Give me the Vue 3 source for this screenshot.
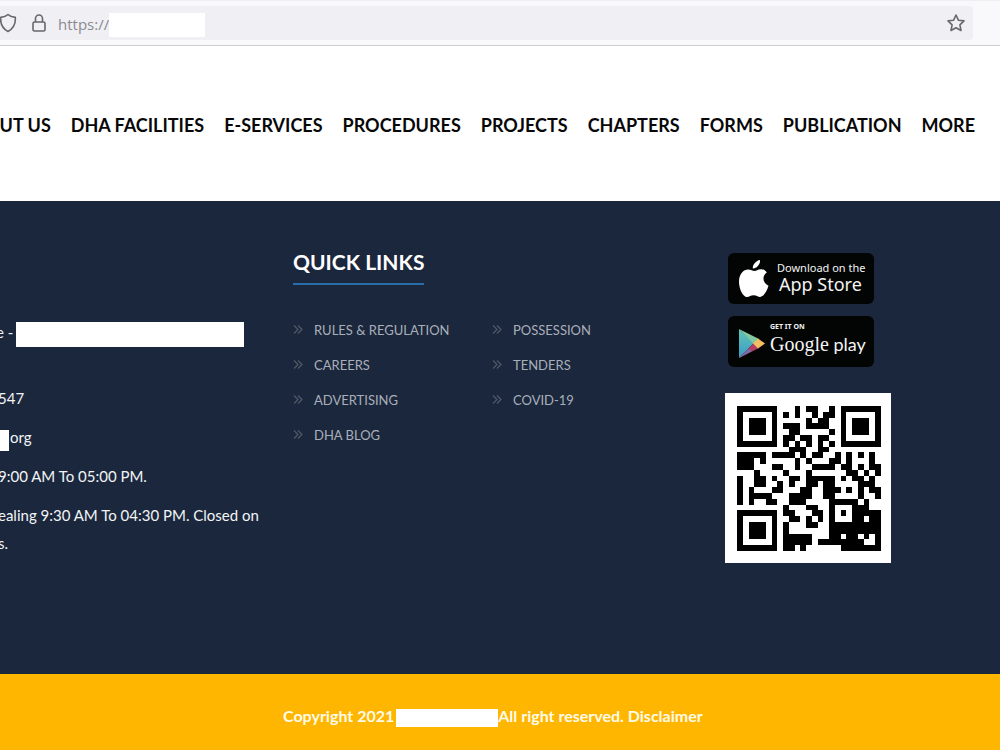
<script setup>
const navItems = ['DHA FACILITIES', 'E-SERVICES', 'PROCEDURES', 'PROJECTS', 'CHAPTERS', 'FORMS', 'PUBLICATION', 'MORE']
const linkColumns = [
  ['RULES & REGULATION', 'CAREERS', 'ADVERTISING', 'DHA BLOG'],
  ['POSSESSION', 'TENDERS', 'COVID-19'],
]

const qrRows = [
  '#######...#.##..#.#######',
  '#.....#.#.#..#.##.#.....#',
  '#.###.#.....#.##..#.###.#',
  '#.###.#.###.####..#.###.#',
  '#.###.#..##.....#.#.###.#',
  '#.....#.##.##.##..#.....#',
  '#######.#.#.#.#.#.#######',
  '.........###..##.........',
  '#####.####.#.##..#.#.#.#.',
  '###.#.....#.#...##.#...#.',
  '###...##..#..####.##.#.##',
  '...#....#...#......##.#.#',
  '#..##.#..##.#####.#.##.#.',
  '#..##..#.#..##.##....###.',
  '#.#...##...##..###.#.#.##',
  '#.####...####..##....#..#',
  '#.#..##..###....#####.#..',
  '........#...##..#...###..',
  '#######.##...##.#.#.#####',
  '#.....#..##.#.#.#...##.##',
  '#.###.#.#...##..#########',
  '#.###.#.#.......#########',
  '#.###.#.#####...##.##.#.#',
  '#.....#.#####.########..#',
  '#######.##.#......#######',
]
const qrPath = qrRows
  .flatMap((row, y) => [...row].map((cell, x) => (cell === '#' ? `M${x} ${y}h1v1h-1z` : '')))
  .join('')
</script>

<template>
  <div class="page">
    <header class="toolbar">
      <div class="address">
        <svg class="shield" viewBox="0 0 20 20" aria-hidden="true">
          <path d="M10 1.500C12 3.500 14.500 4.200 17.300 4.400C17.800 10.500 15.500 15.500 10 18.500C4.500 15.500 2.200 10.500 2.700 4.400C5.500 4.200 8 3.500 10 1.500Z" />
        </svg>
        <svg class="lock" viewBox="0 0 16 20" aria-hidden="true">
          <rect x="2" y="9" width="12" height="9" rx="1.500" />
          <path d="M4.500 9V5.500a3.500 3.500 0 0 1 7 0V9" />
        </svg>
        <input class="url" type="text" value="https://" aria-label="Address" />
        <span class="mask url-mask"></span>
        <button class="bookmark" type="button" aria-label="Bookmark this page">
          <svg viewBox="0 0 20 20" aria-hidden="true">
            <path d="M10 2l2.400 5.200 5.600.700-4.100 3.900 1.100 5.700-5-2.800-5 2.800 1.100-5.700L2 7.900l5.600-.700z" />
          </svg>
        </button>
      </div>
    </header>

    <nav class="nav" aria-label="Main">
      <a href="#">ABOUT US</a>
      <a v-for="item in navItems" :key="item" href="#">{{ item }}</a>
    </nav>

    <main class="footer">
      <section class="contact">
        <p class="address-line">e -<span class="mask name-mask"></span></p>
        <p class="clip">547</p>
        <p><span class="mask mail-mask"></span>org</p>
        <p class="clip"><span>9:00 AM To 05:00 PM.</span></p>
        <p class="clip"><span>ealing 9:30 AM To 04:30 PM. Closed on<br />s.</span></p>
      </section>

      <section class="quick">
        <h2>QUICK LINKS</h2>
        <div class="columns">
          <ul v-for="(column, i) in linkColumns" :key="i">
            <li v-for="link in column" :key="link">
              <svg class="chevrons" viewBox="0 0 10 9" aria-hidden="true">
                <path d="M1 .5l4 4-4 4M5 .5l4 4-4 4" />
              </svg>
              <a href="#">{{ link }}</a>
            </li>
          </ul>
        </div>
      </section>

      <section class="apps">
        <a class="badge" href="#">
          <svg class="apple" viewBox="0 0 32 40" aria-hidden="true">
            <path d="M22 1C22.500 5.500 18.500 9.500 14.800 9.400C14.400 5.500 18.200 1.600 22 1Z" />
            <path d="M28.800 13.500C24 16.500 24.200 24 30.500 26.700C29 31.500 26 37.500 22.300 38C19.500 38 18.600 36.300 15.700 36.300C12.600 36.300 11.500 38 9 38C4.800 37.800 1 29.800 1 22.700C1 15 5.500 10.500 10.200 10.500C12.800 10.500 14.500 12.100 16.500 12.100C18.300 12.100 19.800 10.300 23 10.300C25.500 10.300 27.500 11.500 28.800 13.500Z" />
          </svg>
          <span class="store">
            <small>Download on the</small>
            <b>App Store</b>
          </span>
        </a>
        <a class="badge" href="#">
          <svg class="play" viewBox="0 0 28 31" preserveAspectRatio="none" aria-hidden="true">
            <defs>
              <linearGradient id="playBlue" x1="0" y1="0" x2="0" y2="1">
                <stop offset="0" stop-color="#62c6b8" />
                <stop offset="1" stop-color="#399bc5" />
              </linearGradient>
            </defs>
            <path fill="url(#playBlue)" d="M1 1v29L16 15z" />
            <path fill="#81c9a0" d="M1 1l20 10-5 5z" />
            <path fill="#b33c64" d="M1 30l15-15 5 5z" />
            <path fill="#746fa8" d="M1 30l9-9 4 2z" />
            <path fill="#f2bd63" d="M20 10.500l7 5-7 5-5-5z" />
          </svg>
          <span class="market">
            <small>GET IT ON</small>
            <b><i>Google</i> play</b>
          </span>
        </a>
        <svg class="qr" viewBox="0 0 25 25" preserveAspectRatio="none" shape-rendering="crispEdges" role="img" aria-label="QR code">
          <path :d="qrPath" />
        </svg>
      </section>
    </main>

    <footer class="copyright">
      <span>Copyright 2021</span>
      <span class="mask brand-mask"></span>
      <span>All right reserved. <a href="#">Disclaimer</a></span>
    </footer>
  </div>
</template>

<style>
body {
  margin: 0;
}
</style>

<style scoped>
.page {
  display: flex;
  flex-direction: column;
  min-height: 100vh;
  overflow: hidden;
  background: #fff;
  font-family: Lato, "Liberation Sans", sans-serif;
}
a {
  color: inherit;
  text-decoration: none;
}
p,
h2,
ul {
  margin: 0;
  padding: 0;
}
.mask {
  background: #fff;
  flex: none;
}
.toolbar {
  box-sizing: border-box;
  height: 46px;
  padding: 5px 27px 5px 0;
  background: #f9f9fb;
  border-top: 1px solid #efeff1;
  border-bottom: 1px solid #cccdcf;
}
.address {
  display: flex;
  align-items: center;
  height: 34px;
  background: #f0f0f4;
  border-radius: 0 4px 4px 0;
}
.address svg {
  flex: none;
  fill: none;
  stroke: #66666c;
  stroke-width: 1.6;
  stroke-linejoin: round;
}
.shield {
  width: 20px;
  height: 20px;
  margin-left: -2px;
}
.lock {
  width: 16px;
  height: 20px;
  margin-left: 13px;
}
.url {
  width: 51px;
  margin-left: 11px;
  padding: 2px 0 0;
  border: 0;
  outline: 0;
  background: transparent;
  color: #8a8a90;
  font: 15px "Open Sans", sans-serif;
}
.url-mask {
  width: 96px;
  height: 24px;
  margin-top: 3px;
}
.bookmark {
  display: flex;
  margin-left: auto;
  margin-right: 7px;
  padding: 0;
  border: 0;
  background: none;
}
.bookmark svg {
  width: 20px;
  height: 20px;
}
.nav {
  display: flex;
  align-items: center;
  justify-content: flex-end;
  gap: 20px;
  height: 155px;
  padding-right: 25px;
  color: #080808;
  font-size: 18px;
  font-weight: 700;
  line-height: 24px;
  white-space: nowrap;
}
.nav a {
  padding-top: 2px;
}
.footer {
  flex: 1;
  display: grid;
  grid-template-columns: 293px 1fr 275px;
  background: #1b273d;
  color: #f2f4f6;
}
.contact {
  padding-top: 117px;
  font-size: 15px;
  line-height: 28px;
  white-space: nowrap;
}
.contact p {
  display: flex;
  align-items: center;
  gap: 1px;
  margin-bottom: 11px;
}
.contact p:not(:last-child) {
  height: 28px;
}
.contact .address-line {
  margin-bottom: 38px;
  margin-left: -4px;
}
.name-mask {
  width: 228px;
  height: 25px;
  margin: 4px 0 0 2px;
}
.mail-mask {
  width: 9px;
  height: 21px;
  margin-top: 6px;
}
.contact .clip {
  margin-left: -2px;
}
.quick {
  padding-top: 47px;
}
.quick h2 {
  display: inline-block;
  padding-bottom: 8px;
  border-bottom: 2px solid #2b6cab;
  color: #fff;
  font-size: 21px;
  line-height: 27px;
}
.columns {
  display: grid;
  grid-template-columns: 199px 1fr;
  margin-top: 27px;
}
.columns ul {
  list-style: none;
}
.columns li {
  display: flex;
  align-items: center;
  gap: 11px;
  height: 35px;
  color: #a9afb9;
  font-size: 13px;
  white-space: nowrap;
}
.chevrons {
  width: 10px;
  height: 9px;
  fill: none;
  stroke: #515a68;
  stroke-width: 1.2;
}
.apps {
  display: flex;
  flex-direction: column;
  align-items: flex-start;
  padding-top: 52px;
}
.badge {
  box-sizing: border-box;
  display: flex;
  width: 146px;
  height: 51px;
  margin: 0 0 12px 3px;
  padding: 6px 0 0 10px;
  border-radius: 6px;
  background: #030504;
  color: #f3f3f3;
  font-family: "Noto Sans", sans-serif;
  white-space: nowrap;
}
.badge small,
.badge b {
  display: block;
  font-weight: 400;
}
.apple {
  width: 32px;
  height: 40px;
  fill: #fff;
}
.store {
  padding-left: 7px;
}
.store small {
  font-size: 11px;
  line-height: 18px;
}
.store b {
  padding-left: 2px;
  font-size: 18px;
  line-height: 14px;
}
.play {
  width: 28px;
  height: 31px;
  margin-top: 6px;
}
.market {
  padding-left: 4px;
}
.market small {
  font-size: 7px;
  font-weight: 700;
  line-height: 10px;
}
.market b {
  font-family: Lato, sans-serif;
  font-size: 18px;
  line-height: 24px;
}
.market i {
  font-family: "Liberation Serif", serif;
  font-size: 20px;
  font-style: normal;
}
.qr {
  width: 144px;
  height: 145px;
  margin-top: 14px;
  padding: 13px 10px 12px 12px;
  background: #fff;
}
.copyright {
  display: flex;
  align-items: center;
  height: 76px;
  box-sizing: border-box;
  padding: 6px 0 0 283px;
  background: #ffb600;
  color: #fffbe9;
  font-size: 16px;
  font-weight: 700;
  white-space: nowrap;
}
.brand-mask {
  width: 102px;
  height: 18px;
  margin: 5px 0 0 2px;
}
</style>
